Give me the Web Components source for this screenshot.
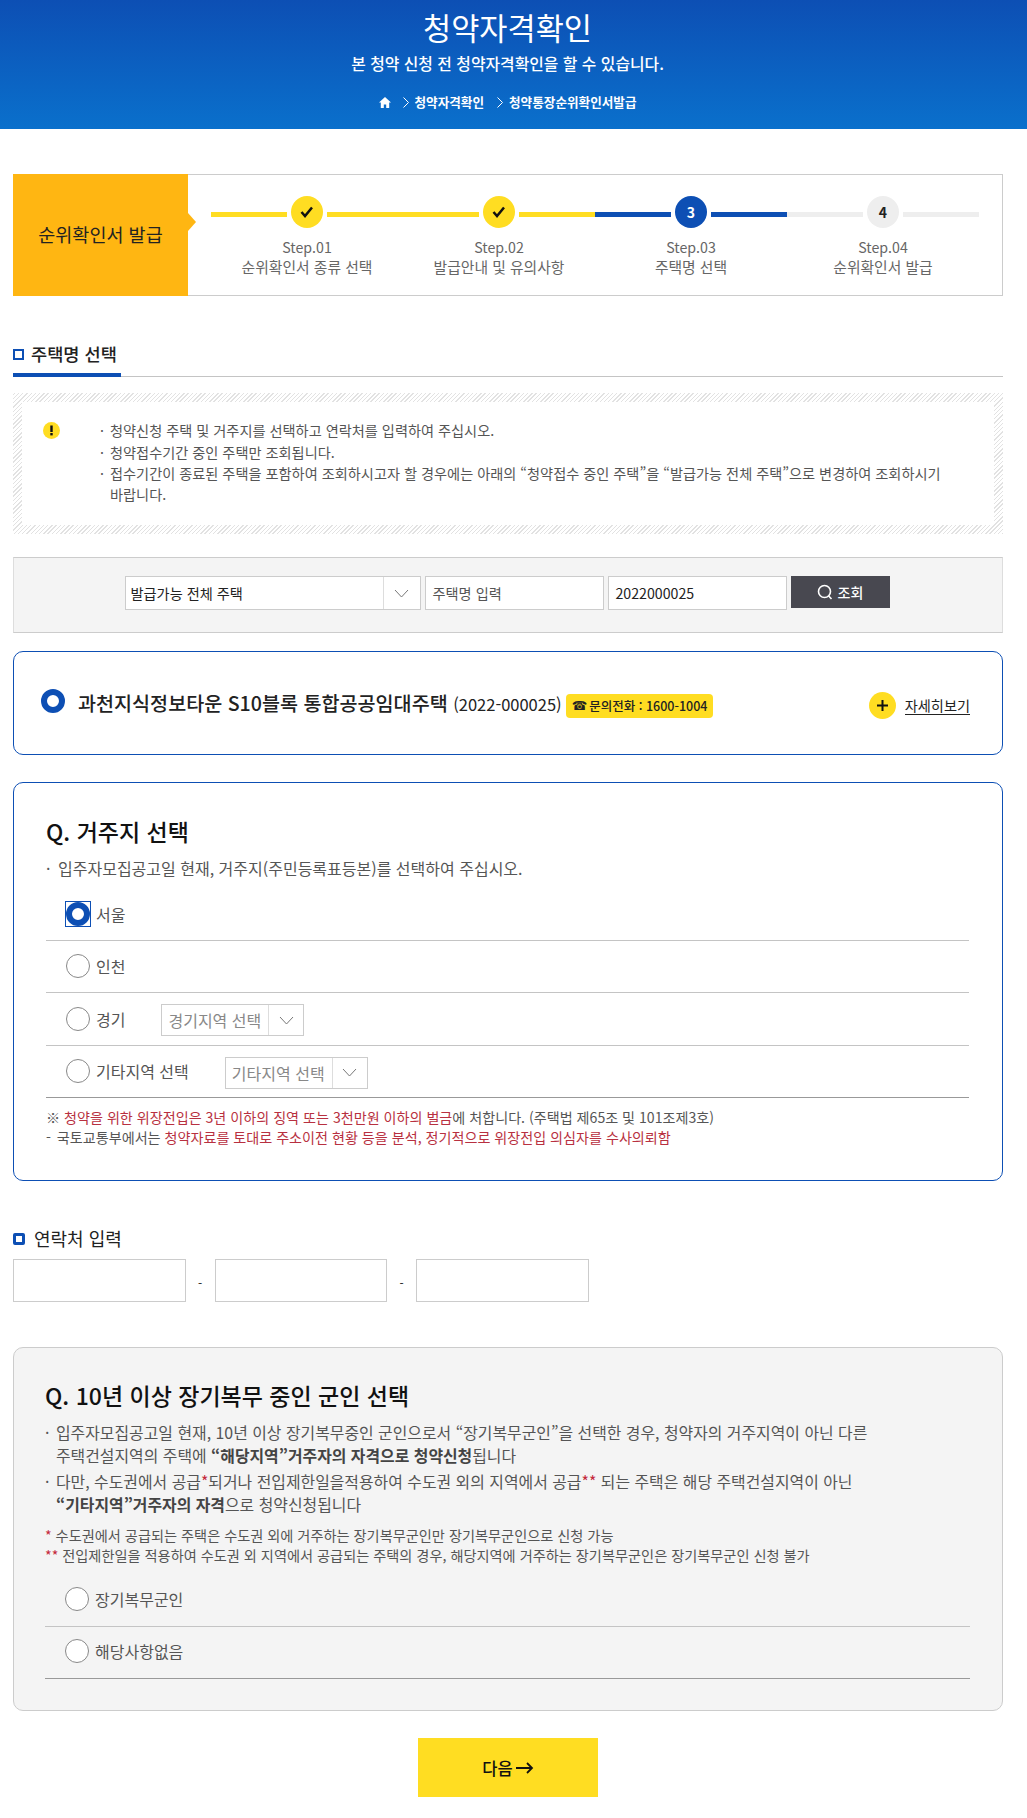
<!DOCTYPE html>
<html lang="ko">
<head>
<meta charset="utf-8">
<title>청약자격확인</title>
<style>
html,body{margin:0;padding:0;background:#fff;}
body{font-family:"Noto Sans CJK KR","Noto Sans",sans-serif;color:#555;font-size:14px;}
.wrap{padding:0 24px 21px 13px;}
</style>
</head>
<body>
<page-hero></page-hero>
<div class="wrap">
  <step-progress></step-progress>
  <tab-title>주택명 선택</tab-title>
  <notice-box>
    <p>청약신청 주택 및 거주지를 선택하고 연락처를 입력하여 주십시오.</p>
    <p>청약접수기간 중인 주택만 조회됩니다.</p>
    <p>접수기간이 종료된 주택을 포함하여 조회하시고자 할 경우에는 아래의 “청약접수 중인 주택”을 “발급가능 전체 주택”으로 변경하여 조회하시기 바랍니다.</p>
  </notice-box>
  <search-bar></search-bar>
  <house-card></house-card>
  <residence-card></residence-card>
  <contact-form></contact-form>
  <military-card></military-card>
  <next-button></next-button>
</div>

<script>
const chevron = `<svg width="15" height="9" viewBox="0 0 15 9" fill="none" stroke="#777" stroke-width="1"><path d="M1 1l6.500 7L14 1"/></svg>`;

class pageHero extends HTMLElement {
    constructor() {
        super();
        this.attachShadow({mode: 'open'});
        this.shadowRoot.innerHTML = `
<style>
:host{display:block;height:129px;background:linear-gradient(#0d4fb4,#0a70cc);color:#fff;text-align:center;padding-right:12px;}
h1{margin:0;padding-top:7px;font-size:30.600px;font-weight:400;line-height:40px;}
p{margin:0;padding-top:6px;font-size:15.850px;font-weight:500;line-height:22px;}
nav{display:flex;justify-content:center;align-items:center;gap:9px;margin-top:18px;font-size:12.600px;font-weight:700;line-height:18px;}
svg{display:block;}
</style>
<h1>청약자격확인</h1>
<p>본 청약 신청 전 청약자격확인을 할 수 있습니다.</p>
<nav>
  <svg width="12" height="11" viewBox="0 0 12 11" fill="#fff"><path d="M6 0L0 5.500h1.800V11h3V7.500h2.400V11h3V5.500H12z"/></svg>
  <svg width="6" height="11" viewBox="0 0 6 11" fill="none" stroke="#fff" style="margin-left:3px"><path d="M.5.5l5 5-5 5"/></svg>
  <span style="margin-left:-3px">청약자격확인</span>
  <svg width="6" height="11" viewBox="0 0 6 11" fill="none" stroke="#fff" style="margin-left:4px"><path d="M.5.5l5 5-5 5"/></svg>
  <span style="margin-left:-3px">청약통장순위확인서발급</span>
</nav>`;
    }
}
customElements.define('page-hero', pageHero);

class stepProgress extends HTMLElement {
    constructor() {
        super();
        this.attachShadow({mode: 'open'});
        const steps = [
            ['Step.01', '순위확인서 종류 선택', 'done'],
            ['Step.02', '발급안내 및 유의사항', 'done'],
            ['Step.03', '주택명 선택', 'now'],
            ['Step.04', '순위확인서 발급', 'todo']
        ];
        const check = `<svg width="14" height="12" viewBox="0 0 14 12" fill="none" stroke="#111" stroke-width="2.500"><path d="M1.500 6l3.500 4 7-8.500"/></svg>`;
        const items = steps.map((s, i) => `
  <div class="step ${s[2]}">
    <div class="track"><i></i><b>${s[2] === 'done' ? check : i + 1}</b><i></i></div>
    <span class="no">${s[0]}</span>
    <span>${s[1]}</span>
  </div>`).join('');
        this.shadowRoot.innerHTML = `
<style>
:host{display:flex;height:122px;margin-top:45px;border:1px solid #ccc;border-left:0;box-sizing:border-box;}
.label{position:relative;width:175px;margin:-1px 0;padding-bottom:2px;box-sizing:border-box;background:#ffb612;color:#222;font-size:18.500px;display:flex;align-items:center;justify-content:center;flex:none;}
.label:after{content:'';position:absolute;left:100%;top:39px;border:solid transparent;border-width:9px 0 9px 8px;border-left-color:#ffb612;}
.steps{display:grid;grid-template-columns:repeat(4,192px);margin-left:23px;padding-top:21px;}
.step{display:flex;flex-direction:column;align-items:center;font-size:14.800px;line-height:19px;color:#666;}
.no{font-size:14.200px;}
.track{display:flex;align-items:flex-start;width:100%;height:42px;}
i{flex:1;height:5px;margin-top:16px;}
b{width:32px;height:32px;margin:0 4px;border-radius:50%;display:flex;align-items:center;justify-content:center;font-size:14px;font-weight:700;}
.done i,.done b{background:#ffdd22;}
.now i,.now b{background:#0d4fb4;}
.now b{color:#fff;}
.todo i,.todo b{background:#eee;}
.todo b{color:#222;}
</style>
<div class="label">순위확인서 발급</div>
<div class="steps">${items}</div>`;
    }
}
customElements.define('step-progress', stepProgress);

class tabTitle extends HTMLElement {
    constructor() {
        super();
        this.attachShadow({mode: 'open'});
        this.shadowRoot.innerHTML = `
<style>
:host{display:block;margin-top:41px;border-bottom:1px solid #c4c4c4;height:39px;}
div{display:inline-flex;align-items:center;height:40px;box-sizing:border-box;border-bottom:4px solid #0d4fb4;padding-bottom:3px;width:108px;color:#222;font-size:17.600px;font-weight:500;white-space:nowrap;}
i{width:7px;height:7px;border:2px solid #0d4fb4;margin-right:7px;margin-top:2px;flex:none;}
</style>
<div><i></i><slot></slot></div>`;
    }
}
customElements.define('tab-title', tabTitle);

class noticeBox extends HTMLElement {
    constructor() {
        super();
        this.attachShadow({mode: 'open'});
        this.shadowRoot.innerHTML = `
<style>
:host{display:block;margin-top:16px;padding:9px;background:repeating-linear-gradient(-45deg,#e2e2e2 0 1px,#fff 1px 3px);}
.in{background:#fff;display:flex;height:123px;padding:18px 40px 0 21px;box-sizing:border-box;}
svg{flex:none;margin:2px 0 0 0;}
.txt{margin-left:40px;}
::slotted(p){margin:0 0 1px;padding-left:10px;font-size:14.200px;line-height:20.500px;color:#555;text-indent:-10px;word-break:keep-all;}
::slotted(p)::before{content:'·';display:inline-block;width:10px;text-indent:0;}
</style>
<div class="in">
  <svg width="17" height="17" viewBox="0 0 17 17"><circle cx="8.500" cy="8.500" r="8.500" fill="#ffdd22"/><rect x="7.300" y="3.500" width="2.400" height="6.500" fill="#111"/><rect x="7.300" y="11" width="2.400" height="2.400" fill="#111"/></svg>
  <div class="txt"><slot></slot></div>
</div>`;
    }
}
customElements.define('notice-box', noticeBox);

class searchBar extends HTMLElement {
    constructor() {
        super();
        this.attachShadow({mode: 'open'});
        this.shadowRoot.innerHTML = `
<style>
:host{display:flex;justify-content:center;gap:4px;margin-top:23px;height:76px;padding:18px 2px 0 0;box-sizing:border-box;background:#f4f4f4;border:1px solid #ccc;border-left-color:#ddd;border-right-color:#ddd;}
.f{height:34px;box-sizing:border-box;border:1px solid #ccc;background:#fff;display:flex;align-items:center;font-size:14.200px;color:#222;}
.sel{width:296px;padding-left:5px;}
.sel span{flex:1;}
.sel em{width:37px;height:100%;box-sizing:border-box;border-left:1px solid #ddd;display:flex;align-items:center;justify-content:center;}
.inp{width:179px;padding-left:7px;}
.ph{color:#555;}
button{width:99px;height:32px;border:0;background:#484850;color:#fff;font:500 14px "Noto Sans CJK KR",sans-serif;display:flex;align-items:center;justify-content:center;gap:5px;padding:0;}
</style>
<div class="f sel"><span>발급가능 전체 주택</span><em>${chevron}</em></div>
<div class="f inp ph">주택명 입력</div>
<div class="f inp">2022000025</div>
<button><svg width="16" height="16" viewBox="0 0 16 16" fill="none" stroke="#fff" stroke-width="1.600"><circle cx="7.500" cy="7.500" r="6"/><path d="M11.500 11.800L14.500 15"/></svg>조회</button>`;
    }
}
customElements.define('search-bar', searchBar);

class radioMark extends HTMLElement {
    constructor() {
        super();
        this.attachShadow({mode: 'open'});
        this.shadowRoot.innerHTML = `
<style>
:host{display:block;flex:none;width:24px;height:24px;}
div{width:100%;height:100%;box-sizing:border-box;border-radius:50%;border:1px solid #888;background:#fff;}
:host([checked]) div{border:6px solid #0d4fb4;}
:host([focused]){outline:1px solid #0d4fb4;}
</style>
<div></div>`;
    }
}
customElements.define('radio-mark', radioMark);

class houseCard extends HTMLElement {
    constructor() {
        super();
        this.attachShadow({mode: 'open'});
        this.shadowRoot.innerHTML = `
<style>
:host{display:flex;align-items:center;height:104px;margin-top:18px;box-sizing:border-box;border:1px solid #0d4fb4;border-radius:10px;padding:0 32px 0 27px;color:#222;white-space:nowrap;}
radio-mark{margin:-5px 13px 0 0;}
.name{font-size:19.600px;font-weight:500;margin-top:-2px;}
.code{font-size:16.500px;font-weight:400;}
.tel{margin:5px 0 0 4px;background:#ffdd22;border-radius:4px;height:24px;padding:0 6px;display:flex;align-items:center;font-size:12.500px;font-weight:500;}
.tel u{text-decoration:none;font-family:"DejaVu Sans",sans-serif;margin-right:2px;}
.more{margin:4px 0 0 auto;display:flex;align-items:center;gap:9px;font-size:14.200px;}
.more i{width:27px;height:27px;border-radius:50%;background:#ffdd22;display:flex;align-items:center;justify-content:center;}
.more span{border-bottom:1px solid #222;line-height:18px;}
</style>
<radio-mark checked></radio-mark>
<span class="name">과천지식정보타운 S10블록 통합공공임대주택 <span class="code">(2022-000025)</span></span>
<span class="tel"><u>☎</u>문의전화 : 1600-1004</span>
<span class="more"><i><svg width="11" height="11" viewBox="0 0 11 11" stroke="#111" stroke-width="2"><path d="M5.500 0v11M0 5.500h11"/></svg></i><span>자세히보기</span></span>`;
    }
}
customElements.define('house-card', houseCard);

class choiceRow extends HTMLElement {
    constructor() {
        super();
        this.attachShadow({mode: 'open'});
        this.shadowRoot.innerHTML = `
<style>
:host{display:flex;align-items:center;height:52.500px;box-sizing:border-box;padding-left:20px;border-bottom:1px solid #c4c4c4;font-size:16px;color:#555;}
:host([last]){border-bottom-color:#999;}
:host([tight]){padding-bottom:2px;}
.t{margin-left:6px;}
::slotted(region-select){margin:3px 0 0 36px;}
</style>
<radio-mark></radio-mark><span class="t"><slot name="label"></slot></span><slot></slot>`;
        if (this.hasAttribute('checked')) {
            const r = this.shadowRoot.querySelector('radio-mark');
            r.setAttribute('checked', '');
            r.setAttribute('focused', '');
        }
    }
}
customElements.define('choice-row', choiceRow);

class regionSelect extends HTMLElement {
    constructor() {
        super();
        this.attachShadow({mode: 'open'});
        this.shadowRoot.innerHTML = `
<style>
:host{display:flex;align-items:center;width:143px;height:32px;box-sizing:border-box;border:1px solid #ccc;background:#fff;color:#888;font-size:16px;}
span{flex:1;padding-left:6px;white-space:nowrap;}
em{width:35px;height:100%;box-sizing:border-box;border-left:1px solid #ddd;display:flex;align-items:center;justify-content:center;}
</style>
<span><slot></slot></span><em>${chevron}</em>`;
    }
}
customElements.define('region-select', regionSelect);

class residenceCard extends HTMLElement {
    constructor() {
        super();
        this.attachShadow({mode: 'open'});
        this.shadowRoot.innerHTML = `
<style>
:host{display:block;margin-top:27px;height:399px;box-sizing:border-box;border:1px solid #0d4fb4;border-radius:10px;padding:32px 33px 0 32px;}
h2{margin:0;font-size:23px;font-weight:500;color:#111;line-height:32px;}
.d{margin:10px 0 0;font-size:16px;line-height:22px;color:#555;}
.d:before{content:'·';display:inline-block;width:12px;}
.rows{margin-top:9px;}
.n{margin-top:8.500px;font-size:14.100px;line-height:20px;color:#555;}
.dash{margin-right:2px;}
.red{color:#b83040;}
</style>
<h2>Q. 거주지 선택</h2>
<p class="d">입주자모집공고일 현재, 거주지(주민등록표등본)를 선택하여 주십시오.</p>
<div class="rows">
  <choice-row checked><span slot="label">서울</span></choice-row>
  <choice-row><span slot="label">인천</span></choice-row>
  <choice-row><span slot="label">경기</span><region-select>경기지역 선택</region-select></choice-row>
  <choice-row last><span slot="label">기타지역 선택</span><region-select>기타지역 선택</region-select></choice-row>
</div>
<div class="n">
  <div>※ <span class="red">청약을 위한 위장전입은 3년 이하의 징역 또는 3천만원 이하의 벌금</span>에 처합니다. (주택법 제65조 및 101조제3호)</div>
  <div><span class="dash">-</span> 국토교통부에서는 <span class="red">청약자료를 토대로 주소이전 현황 등을 분석, 정기적으로 위장전입 의심자를 수사의뢰함</span></div>
</div>`;
    }
}
customElements.define('residence-card', residenceCard);

class contactForm extends HTMLElement {
    constructor() {
        super();
        this.attachShadow({mode: 'open'});
        this.shadowRoot.innerHTML = `
<style>
:host{display:block;margin-top:45px;}
.t{display:flex;align-items:center;height:24px;font-size:18px;color:#222;}
i{width:6px;height:6px;border:3px solid #0d4fb4;border-radius:2px;margin-right:9px;margin-top:2px;}
.row{display:flex;align-items:center;margin-top:9px;}
input{width:172.500px;height:43px;box-sizing:border-box;border:1px solid #ccc;background:#fff;padding:0;margin:0;}
span{width:29px;text-align:center;font-size:12px;color:#222;padding-top:3px;}
</style>
<div class="t"><i></i>연락처 입력</div>
<div class="row"><input type="text"><span>-</span><input type="text"><span>-</span><input type="text"></div>`;
    }
}
customElements.define('contact-form', contactForm);

class militaryCard extends HTMLElement {
    constructor() {
        super();
        this.attachShadow({mode: 'open'});
        this.shadowRoot.innerHTML = `
<style>
:host{display:block;margin-top:45px;height:364px;box-sizing:border-box;background:#f4f4f4;border:1px solid #ccc;border-radius:10px;padding:31px 32px 0 31px;}
h2{margin:0;font-size:23px;font-weight:500;color:#111;line-height:32px;}
.d{margin:10px 0 0;}
.d p{margin:0 0 3px;padding-left:11px;text-indent:-11px;font-size:15.900px;line-height:23px;color:#555;}
.d p::before{content:'·';display:inline-block;width:11px;text-indent:0;}
b{color:#444;font-weight:700;}
.red{color:#c4283a;}
.n{margin-top:9px;font-size:14.200px;line-height:20px;color:#555;}
.rows{margin-top:9px;}
</style>
<h2>Q. 10년 이상 장기복무 중인 군인 선택</h2>
<div class="d">
  <p>입주자모집공고일 현재, 10년 이상 장기복무중인 군인으로서 “장기복무군인”을 선택한 경우, 청약자의 거주지역이 아닌 다른<br>주택건설지역의 주택에 <b>“해당지역”거주자의 자격으로 청약신청</b>됩니다</p>
  <p>다만, 수도권에서 공급<span class="red">*</span>되거나 전입제한일을적용하여 수도권 외의 지역에서 공급<span class="red">**</span> 되는 주택은 해당 주택건설지역이 아닌<br><b>“기타지역”거주자의 자격</b>으로 청약신청됩니다</p>
</div>
<div class="n">
  <div><span class="red">*</span> 수도권에서 공급되는 주택은 수도권 외에 거주하는 장기복무군인만 장기복무군인으로 신청 가능</div>
  <div><span class="red">**</span> 전입제한일을 적용하여 수도권 외 지역에서 공급되는 주택의 경우, 해당지역에 거주하는 장기복무군인은 장기복무군인 신청 불가</div>
</div>
<div class="rows">
  <choice-row tight><span slot="label">장기복무군인</span></choice-row>
  <choice-row tight last><span slot="label">해당사항없음</span></choice-row>
</div>`;
    }
}
customElements.define('military-card', militaryCard);

class nextButton extends HTMLElement {
    constructor() {
        super();
        this.attachShadow({mode: 'open'});
        this.shadowRoot.innerHTML = `
<style>
:host{display:flex;justify-content:center;margin-top:27px;}
button{width:180px;height:59px;border:0;padding:0;background:#ffdd22;color:#111;font:500 16.500px "Noto Sans CJK KR",sans-serif;display:flex;align-items:center;justify-content:center;gap:3px;}
</style>
<button>다음<svg width="18" height="12" viewBox="0 0 18 12" fill="none" stroke="#111" stroke-width="1.800"><path d="M0 6h16M11 1l5 5-5 5"/></svg></button>`;
    }
}
customElements.define('next-button', nextButton);
</script>
</body>
</html>
